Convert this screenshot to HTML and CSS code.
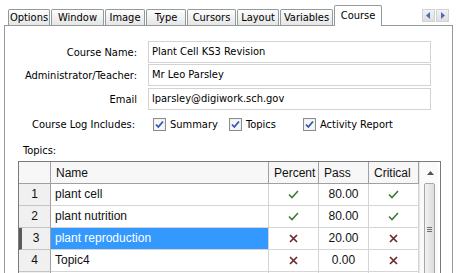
FILE: index.html
```
<!doctype html>
<html>
    <head>
        <meta charset="utf-8"/>
        <link rel="stylesheet" href="styles.css">
    </head>
    <body>
        <div class="tabstrip">
            <div class="tab tab-options">Options</div>
            <div class="tab tab-window">Window</div>
            <div class="tab tab-image">Image</div>
            <div class="tab tab-type">Type</div>
            <div class="tab tab-cursors">Cursors</div>
            <div class="tab tab-layout">Layout</div>
            <div class="tab tab-variables">Variables</div>
            <div class="tab tab-course active">Course</div>
            <div class="tabscroll">
                <span class="tabbtn"><svg width="5" height="7" viewBox="0 0 5 7"><path d="M4 0 L0 3.5 L4 7 Z" fill="#4f6cb8"/></svg></span>
                <span class="tabbtn"><svg width="5" height="7" viewBox="0 0 5 7"><path d="M1 0 L5 3.5 L1 7 Z" fill="#4f6cb8"/></svg></span>
            </div>
        </div>

        <section class="panel">
            <div class="field">
                <label class="label">Course Name:</label>
                <div class="input">Plant Cell KS3 Revision</div>
            </div>
            <div class="field">
                <label class="label">Administrator/Teacher:</label>
                <div class="input">Mr Leo Parsley</div>
            </div>
            <div class="field field-email">
                <label class="label">Email</label>
                <div class="input">lparsley@digiwork.sch.gov</div>
            </div>
            <div class="field field-log">
                <label class="label label-left">Course Log Includes:</label>
                <div class="checks">
                    <span class="check check-summary"><svg class="box" width="13" height="13" viewBox="0 0 13 13"><rect x="0.5" y="0.5" width="12" height="12" fill="#ececec" stroke="#8c8c8c"/><rect x="1.5" y="1.5" width="10" height="10" fill="#f6f6f6"/><path d="M3 6.5 L5.3 9 L10 3.5" fill="none" stroke="#3354b4" stroke-width="1.8"/></svg>Summary</span>
                    <span class="check check-topics"><svg class="box" width="13" height="13" viewBox="0 0 13 13"><rect x="0.5" y="0.5" width="12" height="12" fill="#ececec" stroke="#8c8c8c"/><rect x="1.5" y="1.5" width="10" height="10" fill="#f6f6f6"/><path d="M3 6.5 L5.3 9 L10 3.5" fill="none" stroke="#3354b4" stroke-width="1.8"/></svg>Topics</span>
                    <span class="check"><svg class="box" width="13" height="13" viewBox="0 0 13 13"><rect x="0.5" y="0.5" width="12" height="12" fill="#ececec" stroke="#8c8c8c"/><rect x="1.5" y="1.5" width="10" height="10" fill="#f6f6f6"/><path d="M3 6.5 L5.3 9 L10 3.5" fill="none" stroke="#3354b4" stroke-width="1.8"/></svg>Activity Report</span>
                </div>
            </div>

            <div class="topics-label">Topics:</div>

            <div class="grid">
                <div class="grid-body">
                    <div class="row head">
                        <div class="cell rowhead"></div>
                        <div class="cell">Name</div>
                        <div class="cell">Percent</div>
                        <div class="cell">Pass</div>
                        <div class="cell">Critical</div>
                    </div>
                    <div class="row">
                        <div class="cell rowhead">1</div>
                        <div class="cell name">plant cell</div>
                        <div class="cell mid"><svg width="11" height="9" viewBox="0 0 11 9"><path d="M1 4.5 L4 7.5 L10 1" fill="none" stroke="#3a7b3a" stroke-width="1.6"/></svg></div>
                        <div class="cell mid">80.00</div>
                        <div class="cell mid"><svg width="11" height="9" viewBox="0 0 11 9"><path d="M1 4.5 L4 7.5 L10 1" fill="none" stroke="#3a7b3a" stroke-width="1.6"/></svg></div>
                    </div>
                    <div class="row">
                        <div class="cell rowhead">2</div>
                        <div class="cell name">plant nutrition</div>
                        <div class="cell mid"><svg width="11" height="9" viewBox="0 0 11 9"><path d="M1 4.5 L4 7.5 L10 1" fill="none" stroke="#3a7b3a" stroke-width="1.6"/></svg></div>
                        <div class="cell mid">80.00</div>
                        <div class="cell mid"><svg width="11" height="9" viewBox="0 0 11 9"><path d="M1 4.5 L4 7.5 L10 1" fill="none" stroke="#3a7b3a" stroke-width="1.6"/></svg></div>
                    </div>
                    <div class="row current">
                        <div class="cell rowhead">3</div>
                        <div class="cell name selected">plant reproduction</div>
                        <div class="cell mid"><svg width="9" height="9" viewBox="0 0 9 9"><path d="M1 1 L8 8 M8 1 L1 8" fill="none" stroke="#6d2a2a" stroke-width="1.7"/></svg></div>
                        <div class="cell mid">20.00</div>
                        <div class="cell mid"><svg width="9" height="9" viewBox="0 0 9 9"><path d="M1 1 L8 8 M8 1 L1 8" fill="none" stroke="#6d2a2a" stroke-width="1.7"/></svg></div>
                    </div>
                    <div class="row">
                        <div class="cell rowhead">4</div>
                        <div class="cell name">Topic4</div>
                        <div class="cell mid"><svg width="9" height="9" viewBox="0 0 9 9"><path d="M1 1 L8 8 M8 1 L1 8" fill="none" stroke="#6d2a2a" stroke-width="1.7"/></svg></div>
                        <div class="cell mid">0.00</div>
                        <div class="cell mid"><svg width="9" height="9" viewBox="0 0 9 9"><path d="M1 1 L8 8 M8 1 L1 8" fill="none" stroke="#6d2a2a" stroke-width="1.7"/></svg></div>
                    </div>
                    <div class="row">
                        <div class="cell rowhead"></div>
                        <div class="cell name"></div>
                        <div class="cell"></div>
                        <div class="cell"></div>
                        <div class="cell"></div>
                    </div>
                </div>
                <div class="scrollbar">
                    <div class="sb-up"><svg width="7" height="4" viewBox="0 0 7 4"><path d="M0 4 L3.5 0 L7 4 Z" fill="#505050"/></svg></div>
                    <div class="sb-thumb">
                        <span class="grip"></span>
                    </div>
                </div>
            </div>
        </section>
    </body>
</html>
```

FILE: styles.css
```
:root {
    --tab-border: #919b9c;
    --label: #000;
    --grid-line: #d5d5d5;
    --head-line: #a0a0a0;
    --select: #3399ff;
}

html, body {
    margin: 0;
    background: #fff;
    overflow: hidden;
}

body {
    font-family: "DejaVu Sans", sans-serif;
    font-stretch: condensed;
    font-size: 11px;
    color: var(--label);
    width: 456px;
    height: 273px;
}

/* tabs */
.tabstrip {
    display: flex;
    align-items: flex-end;
    gap: 1px;
    height: 25px;
    padding-left: 8px;
}

.tab {
    box-sizing: border-box;
    height: 16px;
    border: 1px solid var(--tab-border);
    border-bottom: none;
    border-radius: 2px 2px 0 0;
    background: linear-gradient(#fdfdfd, #e6e6e6);
    text-align: center;
    line-height: 15px;
    position: relative;
    top: 0;
}

.tab-options { width: 42px; }
.tab-window { width: 53px; }
.tab-image { width: 40px; }
.tab-type { width: 40px; }
.tab-cursors { width: 49px; }
.tab-layout { width: 42px; }
.tab-variables { width: 53px; }

.tab.active {
    width: 48px;
    height: 21px;
    background: #fff;
    line-height: 19px;
    margin-bottom: -1px;
    z-index: 1;
}

.tabscroll {
    display: flex;
    margin-left: auto;
    margin-right: 7px;
    align-self: flex-start;
    margin-top: 9px;
    gap: 1px;
}

.tabbtn {
    box-sizing: border-box;
    width: 13px;
    height: 13px;
    border: 1px solid #d2d2d2;
    background: linear-gradient(#f2f2f2, #dedede);
    display: flex;
    align-items: center;
    justify-content: center;
}

/* panel */
.panel {
    box-sizing: border-box;
    margin-left: 4px;
    width: 449px;
    height: 260px;
    border: 1px solid var(--tab-border);
    padding-top: 15px;
}

.field {
    display: flex;
    align-items: center;
    height: 22px;
    margin-bottom: 1px;
}

.field-email {
    margin-top: 2px;
}

.label {
    width: 132px;
    text-align: right;
    flex: none;
}

.label-left {
    text-align: left;
    box-sizing: border-box;
    padding-left: 27px;
}

.input {
    box-sizing: border-box;
    margin-left: 11px;
    width: 283px;
    height: 22px;
    border: 1px solid #d3d3d3;
    padding: 0 3px;
    line-height: 20px;
    background: #fff;
}

.field-log {
    margin-top: 4px;
    height: 21px;
}

.checks {
    display: flex;
    margin-left: 16px;
}

.check {
    display: flex;
    align-items: center;
    gap: 4px;
}

.check-summary { width: 76px; }
.check-topics { width: 74px; }

.topics-label {
    margin-top: 9px;
    padding-left: 18px;
    line-height: 13px;
}

/* grid */
.grid {
    display: flex;
    margin-left: 13px;
    margin-top: 4px;
    width: 421px;
    border: 1px solid #7a7a7a;
    font-family: "Liberation Sans", sans-serif;
    font-stretch: normal;
    font-size: 12px;
    color: #111;
}

.grid-body {
    width: 400px;
}

.row {
    display: grid;
    grid-template-columns: 32px 218px 50px 50px 50px;
    height: 22px;
}

.cell {
    box-sizing: border-box;
    border-right: 1px solid var(--grid-line);
    border-bottom: 1px solid var(--grid-line);
    padding: 0 4px;
    line-height: 21px;
    white-space: nowrap;
    overflow: hidden;
}

.head .cell {
    background: #f7f7f7;
    border-color: var(--head-line);
    padding-left: 5px;
    line-height: 23px;
}

.rowhead {
    background: #f0f0f0;
    border-right-color: var(--head-line);
    border-bottom-color: #c4c4c4;
    text-align: center;
}

.current .rowhead {
    border-left: 3px solid #5a5a5a;
}

.mid {
    display: flex;
    align-items: center;
    justify-content: center;
}

.selected {
    background: var(--select);
    color: #fff;
}

.scrollbar {
    width: 19px;
    background: #fafafa;
    border-left: 1px solid #e6e6e6;
    box-sizing: border-box;
}

.sb-up {
    height: 21px;
    display: flex;
    align-items: center;
    justify-content: center;
    padding-left: 2px;
}

.sb-thumb {
    box-sizing: border-box;
    margin-left: 4px;
    width: 11px;
    height: 120px;
    border: 1px solid #a6a6a6;
    border-radius: 2px;
    background: linear-gradient(to right, #f2f2f2, #dcdcdc);
    padding-top: 43px;
}

.grip {
    display: block;
    margin-left: 2px;
    width: 5px;
    height: 5px;
    background: repeating-linear-gradient(#6e6e6e 0 1px, transparent 1px 2px);
}
```
